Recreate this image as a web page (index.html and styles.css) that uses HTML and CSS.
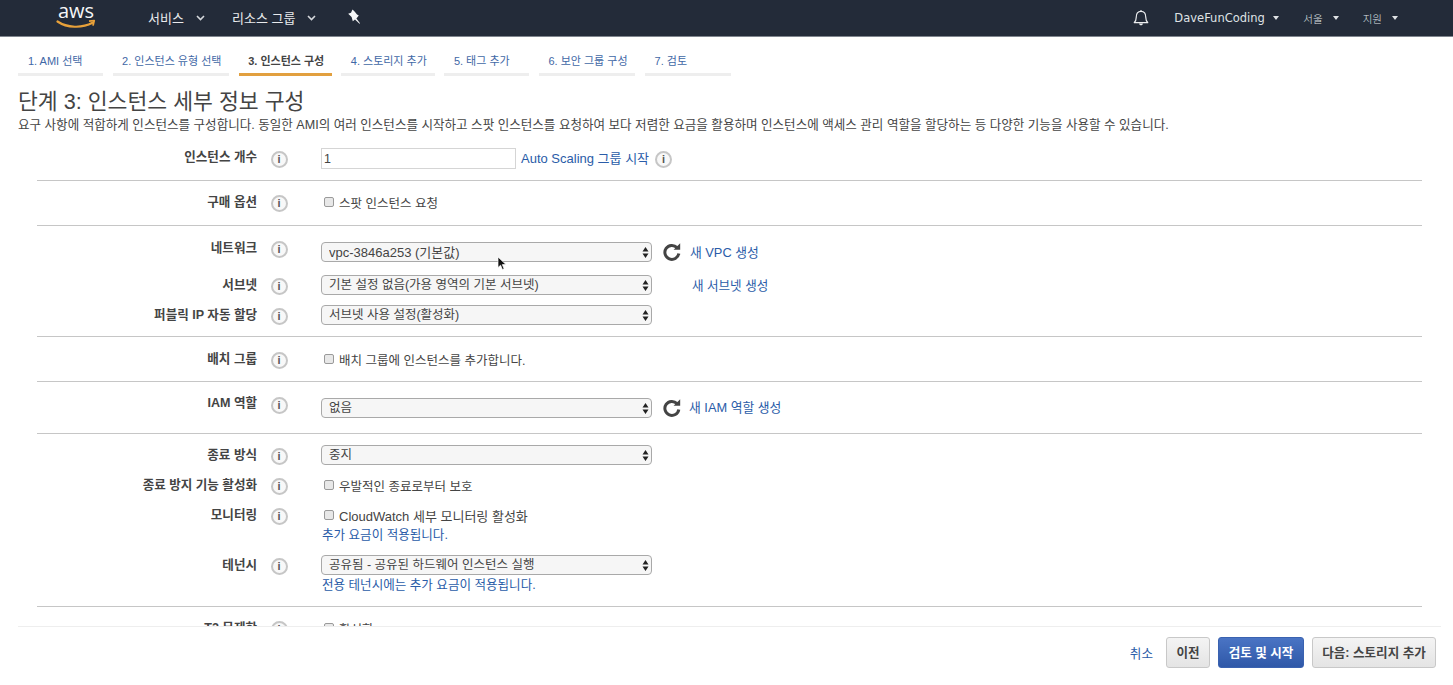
FILE: index.html
```html
<!DOCTYPE html>
<html lang="ko">
<head>
<meta charset="utf-8">
<title>인스턴스 세부 정보 구성</title>
<link rel="stylesheet" href="styles.css">
</head>
<body>
<header class="topbar">
  <a class="logo">
    <svg width="42" height="36" viewBox="0 0 42 36">
      <text x="20" y="18" text-anchor="middle" class="logo-text">aws</text>
      <path d="M1.5 21.5C11 28 26 28.500 36.500 22.800" fill="none" stroke="#e8a13a" stroke-width="2.200" stroke-linecap="round"/>
      <path d="M33 21.200L38.200 20.600L37 25.600" fill="none" stroke="#e8a13a" stroke-width="1.800" stroke-linejoin="round"/>
    </svg>
  </a>
  <nav class="nav-left">
    <span class="nav-item services">서비스<svg class="chev" width="9" height="6" viewBox="0 0 9 6"><path d="M1 1l3.500 3.500L8 1" fill="none" stroke="#d5d8dc" stroke-width="1.600"/></svg></span>
    <span class="nav-item groups">리소스 그룹<svg class="chev" width="9" height="6" viewBox="0 0 9 6"><path d="M1 1l3.500 3.500L8 1" fill="none" stroke="#d5d8dc" stroke-width="1.600"/></svg></span>
    <svg class="pin" width="14" height="15" viewBox="0 0 14 15"><path d="M5.500 .4L7.800 2.800L10 5.600L11.800 6.400L9.400 9.400L13 14.200L12.500 14.700L8 10.600L5.800 12.200L4.600 8L1.200 4.800L4 3.800Z" fill="#f6f7f8"/></svg>
  </nav>
  <nav class="nav-right">
    <svg class="bell" width="16" height="17" viewBox="0 0 16 17"><path d="M1.200 13.600c1.600-1.400 2-2.600 2-5.200C3.200 4.800 5 2.400 8 2.400s4.800 2.400 4.800 6c0 2.600.4 3.800 2 5.200z" fill="none" stroke="#eceef0" stroke-width="1.200" stroke-linejoin="round"/><path d="M7.300 1.200h1.400v1.400H7.300z" fill="#eceef0"/><path d="M6 14.500c.2 1.200 1 1.800 2 1.800s1.800-.6 2-1.800z" fill="#eceef0"/></svg>
    <span class="menu user">DaveFunCoding<i class="caret"></i></span>
    <span class="menu region">서울<i class="caret"></i></span>
    <span class="menu help">지원<i class="caret"></i></span>
  </nav>
</header>

<main class="content">
  <ol class="steps">
    <li class="step s1">1. AMI 선택</li>
    <li class="step s2">2. 인스턴스 유형 선택</li>
    <li class="step s3 active">3. 인스턴스 구성</li>
    <li class="step s4">4. 스토리지 추가</li>
    <li class="step s5">5. 태그 추가</li>
    <li class="step s6">6. 보안 그룹 구성</li>
    <li class="step s7">7. 검토</li>
  </ol>

  <h1 class="title">단계 3: 인스턴스 세부 정보 구성</h1>
  <p class="desc">요구 사항에 적합하게 인스턴스를 구성합니다. 동일한 AMI의 여러 인스턴스를 시작하고 스팟 인스턴스를 요청하여 보다 저렴한 요금을 활용하며 인스턴스에 액세스 관리 역할을 할당하는 등 다양한 기능을 사용할 수 있습니다.</p>

  <form class="form">
    <section class="sec sec-count">
      <div class="row">
        <label class="lbl">인스턴스 개수</label><span class="info">i</span>
        <div class="ctl">
          <input class="num" type="text" value="1">
          <a class="link latin as-link">Auto Scaling 그룹 시작</a><span class="info as-info">i</span>
        </div>
      </div>
    </section>

    <section class="sec sec-buy">
      <div class="row">
        <label class="lbl">구매 옵션</label><span class="info">i</span>
        <div class="ctl"><span class="check"><input type="checkbox">스팟 인스턴스 요청</span></div>
      </div>
    </section>

    <section class="sec sec-net">
      <div class="row">
        <label class="lbl lift">네트워크</label><span class="info lift-icon">i</span>
        <div class="ctl">
          <div class="sel cursor-host"><select class="latin"><option>vpc-3846a253 (기본값)</option></select>
            <svg class="updown" width="7" height="13" viewBox="0 0 7 13"><path d="M3.500 1L6.500 5.500H.5zM3.500 12L.5 7.500H6.500z" fill="#222"/></svg>
            <svg class="cursor" width="10" height="15" viewBox="0 0 10 15"><path d="M1 1v10.500l2.600-2.300 1.800 4.300 1.700-.7-1.800-4.200H9z" fill="#111" stroke="#fff" stroke-width=".7"/></svg>
          </div>
          <svg class="refresh" width="18" height="18" viewBox="0 0 18 18"><path d="M14 4.600A7 7 0 1 0 15.800 10.500" fill="none" stroke="#444" stroke-width="3"/><path d="M10.600 6.800H17.200V.2z" fill="#444"/></svg>
          <a class="link new-vpc">새 VPC 생성</a>
        </div>
      </div>
      <div class="row row-subnet">
        <label class="lbl">서브넷</label><span class="info">i</span>
        <div class="ctl">
          <div class="sel"><select><option>기본 설정 없음(가용 영역의 기본 서브넷)</option></select>
            <svg class="updown" width="7" height="13" viewBox="0 0 7 13"><path d="M3.500 1L6.500 5.500H.5zM3.500 12L.5 7.500H6.500z" fill="#222"/></svg>
          </div>
          <a class="link new-subnet">새 서브넷 생성</a>
        </div>
      </div>
      <div class="row row-ip">
        <label class="lbl">퍼블릭 IP 자동 할당</label><span class="info">i</span>
        <div class="ctl">
          <div class="sel"><select><option>서브넷 사용 설정(활성화)</option></select>
            <svg class="updown" width="7" height="13" viewBox="0 0 7 13"><path d="M3.500 1L6.500 5.500H.5zM3.500 12L.5 7.500H6.500z" fill="#222"/></svg>
          </div>
        </div>
      </div>
    </section>

    <section class="sec sec-place">
      <div class="row">
        <label class="lbl">배치 그룹</label><span class="info">i</span>
        <div class="ctl"><span class="check"><input type="checkbox">배치 그룹에 인스턴스를 추가합니다.</span></div>
      </div>
    </section>

    <section class="sec sec-iam">
      <div class="row">
        <label class="lbl lift">IAM 역할</label><span class="info lift-icon">i</span>
        <div class="ctl">
          <div class="sel"><select><option>없음</option></select>
            <svg class="updown" width="7" height="13" viewBox="0 0 7 13"><path d="M3.500 1L6.500 5.500H.5zM3.500 12L.5 7.500H6.500z" fill="#222"/></svg>
          </div>
          <svg class="refresh" width="18" height="18" viewBox="0 0 18 18"><path d="M14 4.600A7 7 0 1 0 15.800 10.500" fill="none" stroke="#444" stroke-width="3"/><path d="M10.600 6.800H17.200V.2z" fill="#444"/></svg>
          <a class="link new-iam">새 IAM 역할 생성</a>
        </div>
      </div>
    </section>

    <section class="sec sec-stop">
      <div class="row">
        <label class="lbl">종료 방식</label><span class="info">i</span>
        <div class="ctl">
          <div class="sel"><select><option>중지</option></select>
            <svg class="updown" width="7" height="13" viewBox="0 0 7 13"><path d="M3.500 1L6.500 5.500H.5zM3.500 12L.5 7.500H6.500z" fill="#222"/></svg>
          </div>
        </div>
      </div>
      <div class="row gap10">
        <label class="lbl">종료 방지 기능 활성화</label><span class="info">i</span>
        <div class="ctl"><span class="check"><input type="checkbox">우발적인 종료로부터 보호</span></div>
      </div>
      <div class="row gap10">
        <label class="lbl">모니터링</label><span class="info">i</span>
        <div class="ctl"><span class="check latin"><input type="checkbox">CloudWatch 세부 모니터링 활성화</span></div>
        <a class="link note">추가 요금이 적용됩니다.</a>
      </div>
      <div class="row gap10">
        <label class="lbl">테넌시</label><span class="info">i</span>
        <div class="ctl">
          <div class="sel"><select><option>공유됨 - 공유된 하드웨어 인스턴스 실행</option></select>
            <svg class="updown" width="7" height="13" viewBox="0 0 7 13"><path d="M3.500 1L6.500 5.500H.5zM3.500 12L.5 7.500H6.500z" fill="#222"/></svg>
          </div>
        </div>
        <a class="link note">전용 테넌시에는 추가 요금이 적용됩니다.</a>
      </div>
    </section>

    <section class="sec sec-t2">
      <div class="row">
        <label class="lbl">T2 무제한</label><span class="info">i</span>
        <div class="ctl"><span class="check"><input type="checkbox">활성화</span></div>
      </div>
    </section>
  </form>
</main>

<footer class="actions">
  <div class="actions-in">
    <a class="link cancel">취소</a>
    <button class="btn prev" type="button">이전</button>
    <button class="btn primary" type="button">검토 및 시작</button>
    <button class="btn next" type="button">다음: 스토리지 추가</button>
  </div>
</footer>
</body>
</html>
```

FILE: styles.css
```css
* { box-sizing: border-box; }
html, body { height: 100%; }
body {
  margin: 0;
  height: 685px;
  overflow: hidden;
  display: flex;
  flex-direction: column;
  background: #fff;
  color: #444;
  font-family: "Liberation Sans", "Noto Sans CJK KR", sans-serif;
  font-size: 12.5px;
}

/* top bar */
.topbar {
  flex: none;
  height: 37px;
  display: flex;
  align-items: center;
  justify-content: flex-start;
  background: #232b39;
  border-bottom: 1px solid #7f858e;
  color: #e8eaec;
  padding-left: 56px;
  font-family: "DejaVu Sans", "Noto Sans CJK KR", sans-serif;
}
.logo { display: block; height: 36px; }
.logo svg { display: block; }
.logo-text { font-family: "Open Sans", sans-serif; font-size: 20px; fill: #f6f7f8; }
.nav-left { display: flex; align-items: center; margin-left: 50px; font-family: "Noto Sans CJK KR", sans-serif; font-size: 13px; margin-top: -1px; }
.nav-item { display: inline-flex; align-items: center; gap: 12px; }
.services { width: 84px; }
.groups { width: 115px; }
.pin { display: block; margin-top: -3px; }
.nav-right { margin-left: auto; display: flex; align-items: center; font-size: 11.5px; padding-right: 55px; }
.bell { display: block; margin-right: 25px; margin-top: -1px; }
.menu { display: inline-flex; align-items: center; font-size: 11.5px; color: #dfe2e5; }
.menu.user { margin-right: 24px; }
.menu.region { margin-right: 24px; font-family: "Noto Sans CJK KR", sans-serif; font-size: 10.5px; font-weight: 300; }
.menu.help { font-family: "Noto Sans CJK KR", sans-serif; font-size: 10.5px; font-weight: 300; }
.caret { display: inline-block; margin-left: 8.5px; border: 3.5px solid transparent; border-top: 4px solid #dfe2e5; border-bottom: 0; }
.region .caret, .help .caret { margin-left: 10px; }

/* main */
.content { flex: 1; min-height: 0; overflow: hidden; }
.steps {
  list-style: none;
  margin: 16px 0 0 18px;
  padding: 0;
  display: flex;
  gap: 9.6px;
}
.step {
  height: 23px;
  padding: 0 10px;
  border-bottom: 3px solid #eee;
  color: #3f68a6;
  font-size: 11px;
  line-height: 16px;
  white-space: nowrap;
}
.s1 { width: 85px; }
.s2 { width: 116.5px; padding-left: 9.5px; }
.s3 { width: 93px; padding-left: 9.5px; }
.s4 { width: 93.5px; padding-left: 9.5px; }
.s5 { width: 85px; padding-left: 9.5px; }
.s6 { width: 96.5px; padding-left: 9.5px; }
.s7 { width: 85.5px; padding-left: 9.5px; }
.step.active { color: #444; font-weight: 700; border-bottom-color: #e2a03f; }

.title { margin: 13px 0 0 18px; font-size: 21.6px; line-height: 26px; font-weight: 400; color: #444; }
.desc { margin: 2px 0 0 18px; font-size: 12.55px; line-height: 16px; color: #444; white-space: nowrap; }

.form { margin: 0 31px 0 37px; }
.sec { border-bottom: 1px solid #c6c6c6; }
.row {
  display: grid;
  grid-template-columns: 220px 13.5px 17px 33.5px 1fr;
  grid-template-rows: 20px auto;
  align-items: center;
}
.lbl { grid-column: 1; font-weight: 700; font-size: 12.55px; line-height: 16px; text-align: right; color: #444; margin-top: -1px; }
.row > .info { grid-column: 3; margin-top: 2px; }
.info {
  width: 17px; height: 17px;
  border-radius: 50%;
  border: 2px solid #c6c6c6;
  background: #f8f8f8;
  color: #555;
  font: 700 11px/13px "Liberation Sans", sans-serif;
  text-align: center;
  display: inline-block;
}
.ctl { grid-column: 5; display: flex; align-items: center; height: 20px; }
.note { grid-column: 5; line-height: 20px; padding-left: 1px; }
.lbl.lift { margin-top: 0; margin-bottom: 8px; }
.row > .info.lift-icon { margin-top: 0; margin-bottom: 6px; }
.sec-iam .lbl.lift { margin-bottom: 10px; }

.link { color: #2a5ca8; font-size: 12.55px; white-space: nowrap; }
.latin, .check.latin, .link.latin { font-size: 13px; }
.num {
  width: 195px; height: 21px;
  border: 1px solid #d5d5d5;
  padding: 0 2px;
  margin: 0;
  font: 12.5px "Liberation Sans", sans-serif;
  color: #444;
  background: #fff;
}
.as-link { margin: -2px 0 0 5px; }
.as-info { margin-left: 6px; margin-top: 2px; }

.check { display: inline-flex; align-items: center; color: #444; font-size: 12.5px; white-space: nowrap; }
.check input {
  appearance: none;
  width: 10px; height: 10px;
  margin: 0 5px 0 3px;
  border: 1px solid #9a9a9a;
  border-radius: 2px;
  background: #e8e8e8;
}

.sel { position: relative; width: 331px; height: 20px; }
.sel select {
  appearance: none;
  width: 100%; height: 100%;
  border: 1px solid #a9a9a9;
  border-radius: 4px;
  background: #f6f6f6;
  color: #444;
  padding: 0 7px;
  font: 12.5px "Liberation Sans", "Noto Sans CJK KR", sans-serif;
}
.sel select.latin { font-size: 13px; }
.updown { position: absolute; right: 3px; top: 4px; }
.cursor { position: absolute; left: 176px; top: 14px; }
.refresh { flex: none; margin-left: 11px; margin-top: -1px; }
.new-vpc { margin: -2px 0 0 9px; font-size: 12.8px; }
.new-subnet { margin: -2px 0 0 40px; }
.new-iam { margin: -3px 0 0 8px; font-size: 12.8px; }

.sec-count { padding: 0 0 11px; margin-top: 15px; }
.sec-count .row { grid-template-rows: 21px; }
.sec-count .lbl { margin-top: -3px; }
.sec-count .row > .info { margin-top: 1px; }
.sec-buy { padding: 11px 0 13px; }
.sec-net { padding: 16px 0 11px; }
.row-subnet { margin-top: 13px; }
.row-ip { margin-top: 10px; }
.sec-place { padding: 12px 0 12px; }
.sec-iam { padding: 16px 0 15px; }
.sec-stop { padding: 11px 0 11px; }
.gap10 { margin-top: 10px; }
.sec-t2 { border-bottom: 0; padding-top: 11px; }

/* footer */
.actions { flex: none; height: 59px; background: #fff; padding: 0 12px 0 18px; }
.actions-in {
  height: 100%;
  border-top: 1px solid #eee;
  display: flex;
  align-items: flex-start;
  justify-content: flex-end;
  padding: 10px 5px 0 0;
}
.cancel { margin: 6px 13px 0 0; font-size: 12.6px; }
.btn {
  height: 31px;
  margin: 0 0 0 8px;
  padding: 0 0 2px;
  border: 1px solid #c8c8c8;
  border-radius: 3px;
  background: linear-gradient(#f4f4f4, #e4e4e4);
  color: #444;
  font: 700 12.55px "Liberation Sans", "Noto Sans CJK KR", sans-serif;
}
.cancel + .btn { margin-left: 0; }
.prev { width: 44px; }
.primary { width: 86px; color: #fff; background: linear-gradient(#4a74c4, #2f58a8); border-color: #3a62b0; }
.next { width: 124px; }
```
